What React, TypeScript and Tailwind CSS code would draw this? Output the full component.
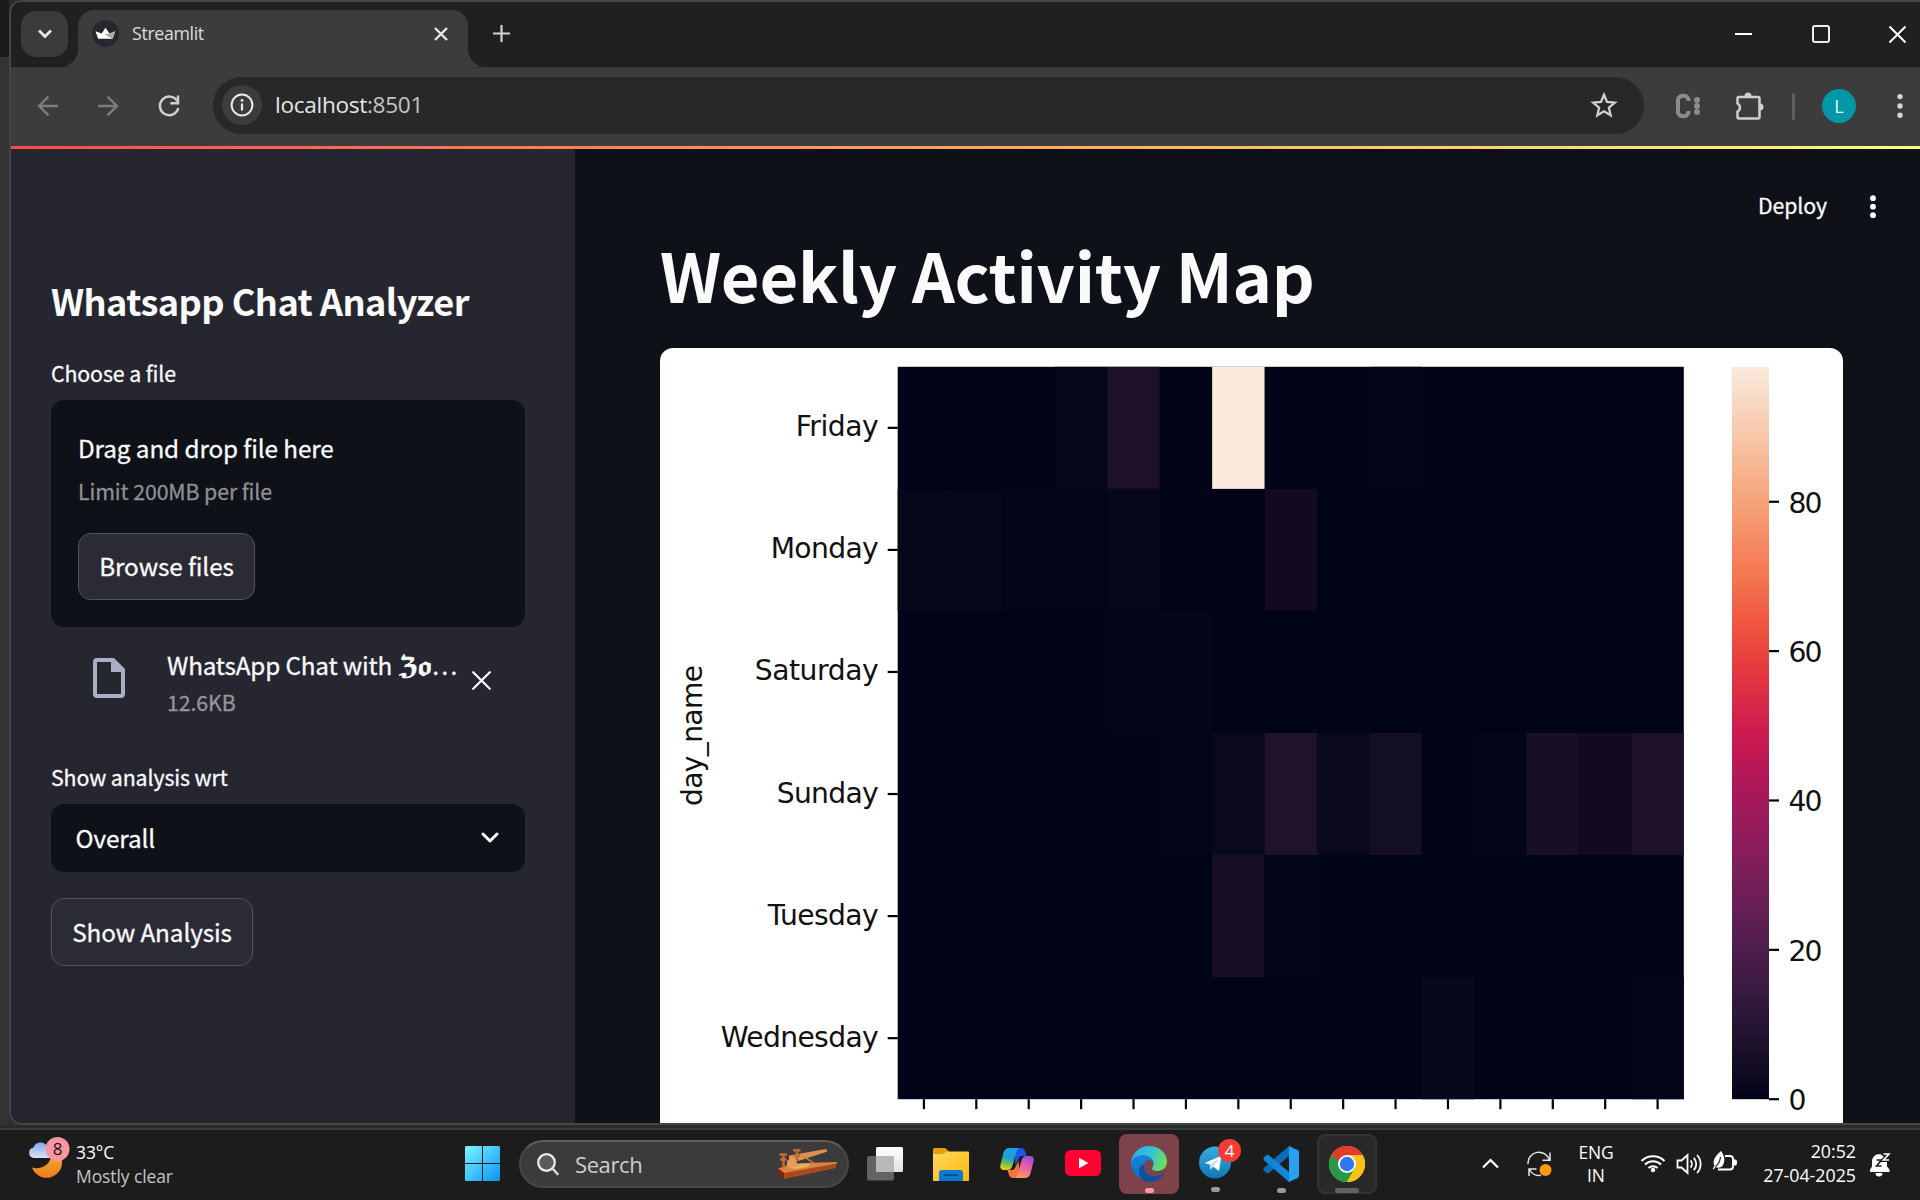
import React from "react";

const UI = "font-['Noto_Sans_CJK_SC','Noto_Sans',sans-serif]";
const SYS = "font-['Open_Sans','Noto_Sans',sans-serif]";

const DAYS = ["Friday", "Monday", "Saturday", "Sunday", "Tuesday", "Wednesday"];
const DAY_WIDTHS = [83, 108, 124, 102, 111, 158];

// [row, column, count]
const CELLS: [number, number, number][] = [
  [0, 3, 2], [0, 4, 7], [0, 6, 98], [0, 9, 1],
  [1, 0, 2], [1, 1, 2], [1, 2, 1], [1, 3, 1], [1, 4, 2], [1, 7, 4],
  [2, 4, 1], [2, 5, 1],
  [3, 5, 1], [3, 6, 3], [3, 7, 8], [3, 8, 3], [3, 9, 5], [3, 11, 1], [3, 12, 6], [3, 13, 4], [3, 14, 7],
  [4, 6, 6], [4, 7, 1],
  [5, 10, 2], [5, 14, 1],
];

const SHADES: Record<number, string> = {
  1: "#030518",
  2: "#06071a",
  3: "#0a081d",
  4: "#110a20",
  5: "#140e22",
  6: "#180f25",
  7: "#1c1128",
  8: "#20122a",
  98: "#faebdc",
};

const ROCKET: [number, string][] = [
  [0, "#faebdd"], [0.07, "#f8d0b5"], [0.143, "#f6b48f"], [0.2, "#f69c73"], [0.286, "#f37651"],
  [0.35, "#ef5640"], [0.4, "#e83f3f"], [0.429, "#e13342"], [0.5, "#cb1b4f"], [0.571, "#ad1759"],
  [0.6, "#a11a5b"], [0.714, "#701f57"], [0.8, "#4c1d4b"], [0.857, "#35193e"], [0.93, "#1c112a"], [1, "#020419"],
];

const PX = 897.7 - 660;
const PY = 366.8 - 348;
const CW = 786.1 / 15;
const RH = 732.4 / 6;

function Heatmap() {
  const bottom = PY + RH * 6;
  return (
    <svg width="1183" height="775" viewBox="0 0 1183 775" className="block" fontFamily="'DejaVu Sans', sans-serif" fontSize="28.2">
      <defs>
        <linearGradient id="rocket" x1="0" y1="0" x2="0" y2="1">
          {ROCKET.map(([o, c]) => <stop key={o} offset={o} stopColor={c} />)}
        </linearGradient>
      </defs>
      <rect x={PX} y={PY} width={CW * 15} height={RH * 6} fill="#010316" />
      {CELLS.map(([r, c, v]) => (
        <rect key={`${r}-${c}`} x={PX + c * CW} y={PY + r * RH} width={CW} height={RH} fill={SHADES[v]} />
      ))}
      {DAYS.map((d, i) => {
        const y = PY + RH * (i + 0.5);
        return (
          <g key={d}>
            <rect x={PX - 10} y={y - 1.1} width="10" height="2.2" fill="#000" />
            <text x={PX - 19} y={y + 8.5} textAnchor="end" textLength={DAY_WIDTHS[i]} fill="#111">{d}</text>
          </g>
        );
      })}
      {Array.from({ length: 15 }, (_, i) => (
        <rect key={i} x={PX + CW * (i + 0.5) - 1.1} y={bottom} width="2.2" height="10" fill="#000" />
      ))}
      <text transform="translate(41.5 387.5) rotate(-90)" textAnchor="middle" textLength="141" fill="#111">day_name</text>
      <rect x="1072" y={PY} width="37" height={RH * 6} fill="url(#rocket)" />
      {[0, 20, 40, 60, 80].map((v) => {
        const y = bottom - v * 7.468;
        return (
          <g key={v}>
            <rect x="1109" y={y - 1.1} width="10" height="2.2" fill="#000" />
            <text x="1128.5" y={y + 11} textLength={v ? 34 : 17} fill="#111">{v}</text>
          </g>
        );
      })}
    </svg>
  );
}

function TabStrip() {
  return (
    <div className="flex h-[65px] items-start bg-[#1f2120] pl-[10px]">
      <div className="mt-[9px] flex h-[46px] w-[47px] items-center justify-center rounded-[15px] bg-[#3b3b3b]">
        <svg width="16" height="12" viewBox="0 0 16 12" fill="none" stroke="#e6e6e6" strokeWidth="2.8"><path d="M2 2.5l6 6 6-6" /></svg>
      </div>
      <div className="relative mt-2 ml-[10px] flex h-[57px] w-[390px] items-start rounded-t-[16px] bg-[#3c3c3c] pl-[14px]">
        <svg className="absolute bottom-0 -left-[18px]" width="18" height="18"><path d="M18 0v18H0A18 18 0 0 0 18 0z" fill="#3c3c3c" /></svg>
        <svg className="absolute bottom-0 -right-[18px]" width="18" height="18"><path d="M0 0v18h18A18 18 0 0 1 0 0z" fill="#3c3c3c" /></svg>
        <svg className="mt-[10px]" width="27" height="27" viewBox="0 0 27 27">
          <circle cx="13.5" cy="13.5" r="13.5" fill="#262730" />
          <path d="M3.5 11.200l6.200 2.300 3.800-5.700 3.900 5.700 6-2.300-2.800 7.600H6.200z" fill="#fff" />
          <path d="M17.400 13.500l6-2.300-2.800 7.600-8-4.200z" fill="#a9a9ad" />
        </svg>
        <span className={`${SYS} mt-[10px] ml-[13px] text-[17.8px] leading-[26px] tracking-[-0.35px] text-[#dedede]`}>Streamlit</span>
        <svg className="absolute top-[17px] left-[356px]" width="14" height="14" viewBox="0 0 14 14" stroke="#e8e8e8" strokeWidth="2.4"><path d="M1 1l12 12M13 1L1 13" /></svg>
      </div>
      <svg className="mt-[23px] ml-[25px]" width="17" height="17" viewBox="0 0 17 17" stroke="#d2d2d2" strokeWidth="2.2"><path d="M8.500 0v17M0 8.500h17" /></svg>
      <div className="mr-[14px] ml-auto flex items-center gap-[59.5px] pt-[23px]">
        <div className="h-[2px] w-[17px] bg-white" />
        <div className="h-[18px] w-[18px] rounded-[3px] border-2 border-[#ececec]" />
        <svg width="17" height="17" viewBox="0 0 17 17" stroke="#fff" strokeWidth="2"><path d="M.5 .5l16 16M16.500 .5l-16 16" /></svg>
      </div>
    </div>
  );
}

function Toolbar() {
  return (
    <div className="flex h-[79px] items-start border-t border-[#343535] bg-[#3c3c3c]">
      <div className="flex h-[76px] w-[202px] items-center pl-[26px]">
        <svg width="22" height="22" viewBox="0 0 22 22" fill="none" stroke="#7d7d7d" strokeWidth="2.3"><path d="M21 11H2.500M11.500 1.600L2 11l9.500 9.400" /></svg>
        <svg className="ml-[38px]" width="22" height="22" viewBox="0 0 22 22" fill="none" stroke="#7d7d7d" strokeWidth="2.3"><path d="M1 11h18.500M10.500 1.600L20 11l-9.500 9.400" /></svg>
        <svg className="ml-[38px]" width="24" height="24" viewBox="0 0 24 24" fill="none" stroke="#cfcfcf" strokeWidth="2.5"><path d="M20.300 7.200A9.300 9.300 0 1 0 21.300 14" /><path d="M21 1.500v7.700h-7.700" /></svg>
      </div>
      <div className="mt-[9px] flex h-[57px] w-[1431px] items-center rounded-full bg-[#282828] pb-px pl-[9px]">
        <div className="flex h-10 w-10 items-center justify-center rounded-full bg-[#3c3c3c]">
          <svg width="24" height="24" viewBox="0 0 24 24"><circle cx="12" cy="12" r="10.400" fill="none" stroke="#ececec" strokeWidth="2" /><path d="M12 10.500v7" stroke="#ececec" strokeWidth="2.200" /><circle cx="12" cy="7.400" r="1.400" fill="#ececec" /></svg>
        </div>
        <span className={`${SYS} ml-[13px] text-[22.6px] leading-[30px] tracking-[-0.3px] text-[#e6e6e6]`}>localhost<span className="text-[#c4c4c4]">:8501</span></span>
        <svg className="mr-[26px] ml-auto" width="28" height="28" viewBox="0 0 28 28" fill="none" stroke="#cfcfcf" strokeWidth="2.300"><path d="M14 3.800l3 7.100 7.800.7-5.900 5.100 1.800 7.600L14 20.300l-6.700 4 1.800-7.600-5.900-5.100 7.800-.7z" /></svg>
      </div>
      <div className="ml-[31px] flex h-[76px] items-center">
        <svg width="26" height="28" viewBox="0 0 26 28"><path d="M13.500 9V7.500A5.500 5.500 0 0 0 3 7.500v13a5.500 5.500 0 0 0 10.500 0V19" fill="none" stroke="#8c8c8c" strokeWidth="4" /><circle cx="22" cy="8" r="3" fill="#8c8c8c" /><circle cx="22" cy="14" r="3" fill="#8c8c8c" /><circle cx="22" cy="20" r="3" fill="#8c8c8c" /></svg>
        <svg className="ml-[34px]" width="30" height="30" viewBox="0 0 30 30"><path d="M4 6h19a1.500 1.500 0 0 1 1.500 1.500V26a1.500 1.500 0 0 1-1.500 1.500H4A1.500 1.500 0 0 1 2.500 26v-5.500a4.500 4.500 0 0 0 0-8V7.500A1.500 1.500 0 0 1 4 6z" fill="none" stroke="#cfcfcf" strokeWidth="2.500" /><path d="M9.500 5a3.500 3.500 0 0 1 7 0zM25 12.500a3.500 3.500 0 0 1 0 7z" fill="#cfcfcf" /></svg>
        <div className="ml-[27px] h-[27px] w-[3px] rounded-full bg-[#5f5f5f]" />
        <div className={`${SYS} ml-[27px] flex h-[34px] w-[34px] items-center justify-center rounded-full bg-[#0097a7] text-[18px] text-[#e4f6f8]`}>L</div>
        <svg className="ml-[40px]" width="8" height="26" viewBox="0 0 8 26" fill="#d5d5d5"><circle cx="4" cy="3.600" r="2.700" /><circle cx="4" cy="13" r="2.700" /><circle cx="4" cy="22.300" r="2.700" /></svg>
      </div>
    </div>
  );
}

function Sidebar() {
  return (
    <aside className={`${UI} h-[974px] w-[564px] shrink-0 bg-[#262630] pt-[129px] pr-[50px] pl-[40px] tracking-[-0.1px] text-[#fafafa] [-webkit-text-stroke:0.3px]`}>
      <h2 className="h-11 text-[36.2px] leading-[44px] font-semibold tracking-[-0.58px] whitespace-nowrap [-webkit-text-stroke:0px]">Whatsapp Chat Analyzer</h2>
      <p className="mt-[37px] h-[28px] text-[21.3px] leading-[28px]">Choose a file</p>
      <div className="mt-[13px] h-[227px] rounded-[13px] bg-[#0e1117] pt-[31px] pl-[27px]">
        <p className="h-[34px] text-[24.3px] leading-[34px]">Drag and drop file here</p>
        <p className="mt-[12px] h-[28px] text-[21.3px] leading-[28px] text-[#8f9093]">Limit 200MB per file</p>
        <button className="mt-[28px] flex h-[67px] w-[177px] items-center justify-center rounded-[13px] border border-[#52535b] bg-[#2b2b36] pb-[2px] text-[24.300px] leading-[34px]">Browse files</button>
      </div>
      <div className="mt-[21px] flex h-[70px] pl-[42px]">
        <svg className="mt-[10px]" width="32" height="40" viewBox="0 0 32 40"><path d="M4 0h17l11 11v25a4 4 0 0 1-4 4H4a4 4 0 0 1-4-4V4a4 4 0 0 1 4-4z M4 4v32h24V14H18V4z" fillRule="evenodd" fill="#a9afc3" /></svg>
        <div className="ml-[42px] w-[296px]">
          <p className="h-[34px] text-[24.300px] leading-[34px] tracking-[-0.18px] whitespace-nowrap">WhatsApp Chat with <span className="font-['DejaVu_Math_TeX_Gyre','DejaVu_Sans',serif] leading-[0] tracking-[-0.8px] [-webkit-text-stroke:0.7px]">𝖅𝖔</span>…</p>
          <p className="mt-[6px] h-[28px] text-[21.300px] leading-[28px] text-[#96969b]">12.6KB</p>
        </div>
        <svg className="mt-[23px] ml-[9px]" width="19" height="19" viewBox="0 0 19 19" fill="none" stroke="#fafafa" strokeWidth="2.200" strokeLinecap="round"><path d="M1.200 1.200l16.600 16.600M17.800 1.200L1.200 17.800" /></svg>
      </div>
      <p className="mt-[45px] h-[28px] text-[21.300px] leading-[28px]">Show analysis wrt</p>
      <div className="mt-[13px] flex h-[68px] items-center justify-between rounded-[13px] bg-[#0e1117] pr-[26px] pb-px pl-[24.5px] text-[24.300px] leading-[34px]">
        Overall
        <svg width="18" height="12" viewBox="0 0 18 12" fill="none" stroke="#fafafa" strokeWidth="3" strokeLinecap="round" strokeLinejoin="round"><path d="M2 2l7 7 7-7" /></svg>
      </div>
      <button className="mt-[26px] flex h-[68px] w-[202px] items-center justify-center rounded-[13px] border border-[#52535b] bg-[#2b2b36] text-[24.300px] leading-[34px]">Show Analysis</button>
    </aside>
  );
}

function Main() {
  return (
    <main className={`${UI} h-[974px] flex-1 overflow-hidden bg-[#0e1117] text-[#fafafa]`}>
      <header className="flex h-[76px] items-end justify-end pr-[43px]">
        <span className="h-[34px] text-[21.300px] leading-[28px] tracking-[-0.1px] [-webkit-text-stroke:0.3px]">Deploy</span>
        <svg className="mb-[6px] ml-[42px]" width="8" height="24" viewBox="0 0 8 24" fill="#fafafa"><circle cx="4" cy="3.200" r="2.900" /><circle cx="4" cy="11.700" r="2.900" /><circle cx="4" cy="20.200" r="2.900" /></svg>
      </header>
      <h1 className="mt-[9px] ml-[85px] h-[80px] text-[66.800px] leading-[80px] font-bold tracking-[-0.25px] whitespace-nowrap">Weekly Activity Map</h1>
      <div className="mt-[34px] ml-[85px] w-[1183px] overflow-hidden rounded-t-[13px] bg-white">
        <Heatmap />
      </div>
    </main>
  );
}

function Weather() {
  return (
    <div className={`${SYS} flex w-[436px] pl-7`}>
      <svg className="mt-[6px]" width="43" height="44" viewBox="0 0 43 44">
        <defs>
          <linearGradient id="moon" x1="0" y1="0" x2="0" y2="1"><stop offset="0" stopColor="#f4b63a" /><stop offset="1" stopColor="#ee7a1b" /></linearGradient>
          <linearGradient id="cloud" x1="0" y1="0" x2="0" y2="1"><stop offset="0" stopColor="#7fa8ea" /><stop offset="1" stopColor="#d9e4f8" /></linearGradient>
        </defs>
        <path d="M28 14a15.500 15.500 0 1 1-24 17.500C13 34 23 29 23.500 18z" fill="url(#moon)" />
        <path d="M6 22a5.300 5.300 0 0 1-.5-10.500 7.500 7.500 0 0 1 13.500-1.500 6 6 0 0 1 3 12z" fill="url(#cloud)" />
        <circle cx="29.500" cy="13" r="12" fill="#fc96a0" />
        <text x="29.500" y="19.300" fontSize="17" textAnchor="middle" fill="#111">8</text>
      </svg>
      <div className="ml-[5px] pt-[10px] text-[17.500px] leading-[24px] tracking-[-0.1px]">
        <p className="text-white">33°C</p>
        <p className="text-[#c4c4c4]">Mostly clear</p>
      </div>
    </div>
  );
}

function TaskIcons() {
  return (
    <>
      <svg className="mt-[16px] ml-[1px] shrink-0" width="35" height="35" viewBox="0 0 35 35">
        <defs><linearGradient id="win" x1="0" y1="0" x2="1" y2="1"><stop offset="0" stopColor="#7cf5ff" /><stop offset="1" stopColor="#0a92f8" /></linearGradient></defs>
        <path d="M1.500 0H17v17H0V1.500A1.500 1.500 0 0 1 1.500 0zM18 0h15.500A1.500 1.500 0 0 1 35 1.500V17H18zM0 18h17v17H1.500A1.500 1.500 0 0 1 0 33.500zM18 18h17v15.500a1.500 1.500 0 0 1-1.500 1.500H18z" fill="url(#win)" />
      </svg>
      <div className="mt-[10px] ml-[19px] flex h-12 w-[330px] shrink-0 items-center rounded-full border-2 border-[#484848] border-t-[#5c5c5c] bg-[#3b3b3b] pl-4">
        <svg width="22" height="23" viewBox="0 0 22 23"><circle cx="9.500" cy="9.500" r="8.300" fill="#5a5a5a" stroke="#f0f0f0" strokeWidth="2.200" /><path d="M15.500 15.500l5 5.500" stroke="#d8d8d8" strokeWidth="2.600" strokeLinecap="round" /></svg>
        <span className={`${SYS} ml-4 text-[22px] leading-[30px] tracking-[-0.4px] text-[#cfcfcf]`}>Search</span>
        <svg className="mr-[9px] ml-auto" width="61" height="32" viewBox="0 0 61 32">
          <path d="M1 22l58-8v6L7 31l-6-6z" fill="#a84a1c" />
          <path d="M1 20.500l14-5 45-1.500v1.500L7 25z" fill="#dd8044" />
          <path d="M1 20.500L7 25v6l-6-5.500z" fill="#7a2415" />
          <path d="M12 20l13-4.500 8 .5-2 3-12 2z" fill="#e2b557" />
          <path d="M12 7.500L49 1l1.500 2.500L23 12.500l-11 1z" fill="#dd8f4f" />
          <path d="M10 19.500V13l4-3h5l1.500 8.500z" fill="#e89a58" />
          <path d="M2.500 6.500h7.500M3 11.500h6.500M6.500 6v14M16 2.200h7.500M16.500 7.500h6.500M20 2v10" stroke="#c26a34" strokeWidth="2.600" />
          <path d="M29 10l9 6" stroke="#d28445" strokeWidth="1.500" />
        </svg>
      </div>
      <svg className="mt-[17px] ml-[18px] shrink-0" width="36" height="34" viewBox="0 0 36 34">
        <defs><linearGradient id="tv" x1="0" y1="0" x2="0" y2="1"><stop offset="0" stopColor="#fff" /><stop offset="1" stopColor="#e2e2e2" /></linearGradient></defs>
        <rect x="0" y="9" width="27" height="24.500" rx="2" fill="#626262" /><rect x="9" y="0" width="27" height="25" rx="1.500" fill="url(#tv)" /><path d="M9 9h18v16H9z" fill="#b9b9b9" />
      </svg>
      <svg className="mt-[18px] ml-[30px] shrink-0" width="36" height="33" viewBox="0 0 36 33">
        <defs><linearGradient id="fold" x1="0" y1="0" x2="1" y2="1"><stop offset="0" stopColor="#ffd95e" /><stop offset="1" stopColor="#fcb80e" /></linearGradient></defs>
        <path d="M1.500 0H12l4 3.500V9H0V1.500A1.500 1.500 0 0 1 1.500 0z" fill="#e2a106" /><path d="M0 6h9l6-2.500h20A1 1 0 0 1 36 4.500v27a1 1 0 0 1-1 1.500H0z" fill="url(#fold)" /><path d="M6 33v-8a3 3 0 0 1 3-3h18a3 3 0 0 1 3 3v8z" fill="#0f78d0" /><path d="M11.500 27.200h13" stroke="#0a4a93" strokeWidth="1.800" strokeLinecap="round" />
      </svg>
      <svg className="mt-[17px] ml-[31px] shrink-0" width="34" height="32" viewBox="0 0 34 32">
        <defs>
          <linearGradient id="cpa" x1=".5" y1="0" x2=".3" y2="1"><stop offset="0" stopColor="#1aa0f0" /><stop offset=".45" stopColor="#1e9fd0" /><stop offset=".75" stopColor="#7cc142" /><stop offset="1" stopColor="#f5d013" /></linearGradient>
          <linearGradient id="cpb" x1=".7" y1="0" x2=".3" y2="1"><stop offset="0" stopColor="#a648e8" /><stop offset=".5" stopColor="#e8639f" /><stop offset="1" stopColor="#ff9d57" /></linearGradient>
          <linearGradient id="cpc" x1="0" y1="0" x2="1" y2="1"><stop offset="0" stopColor="#1a4fd8" /><stop offset="1" stopColor="#1f62ea" /></linearGradient>
        </defs>
        <path d="M14 1h7q3 0 4 3l1.500 5H22q-2.500 0-3.500 3l-3 6z" fill="url(#cpc)" />
        <path d="M20 31h-7q-3 0-4-3l-1.500-5H12q2.500 0 3.500-3l3-6z" fill="#f4743b" />
        <path d="M9 1h11q-2.500 0-3.500 3.500l-4 14Q11.300 23 7.500 23H4Q-.8 23 .5 17.500L3.500 5.500Q5 1 9 1z" fill="url(#cpa)" />
        <path d="M25 31H14q2.500 0 3.500-3.500l4-14Q22.700 9 26.500 9H30q4.800 0 3.500 5.500l-3 12Q29 31 25 31z" fill="url(#cpb)" />
      </svg>
      <svg className="mt-[20px] ml-[31px] shrink-0" width="36" height="26" viewBox="0 0 36 26"><rect width="36" height="26" rx="5.500" fill="#ff0033" /><path d="M14 7.800l9.500 5.200-9.500 5.200z" fill="#fff" /></svg>
      <div className="mt-1 ml-[18px] flex h-[60px] w-[60px] shrink-0 flex-col items-center rounded-[8px] bg-[#7e434a] pt-3">
        <svg width="36" height="36" viewBox="0 0 36 36">
          <defs>
            <linearGradient id="ea" x1="0" y1=".3" x2="1" y2=".6"><stop offset="0" stopColor="#33a9ea" /><stop offset=".5" stopColor="#35c3d4" /><stop offset="1" stopColor="#6be052" /></linearGradient>
            <linearGradient id="eb" x1="0" y1="0" x2="0" y2="1"><stop offset="0" stopColor="#1683d8" /><stop offset="1" stopColor="#0b6fd0" /></linearGradient>
          </defs>
          <path d="M0 18A18 18 0 0 1 18 0c10.500 0 18 7.500 18 15.500 0 6-4.500 9.500-9.500 9.500-3.500 0-5.500-1-5.500-2.500 0-1 1.500-1.500 1.500-5 0-3.500-3.500-8-9.500-8C6 9.500 1 14 0 18z" fill="url(#ea)" />
          <path d="M0 18C.5 13 5 9.300 11 9.300c7 0 11.500 4 11.500 8-1-2-3-3.300-5-3.300-3.500 0-5.500 4-4 9 1.500 5.500 7 9.500 13 9.500A18 18 0 0 1 0 18z" fill="url(#eb)" />
          <path d="M13.200 18C12 24 16 30 23 30c4 0 7-1 9.300-2.800.7-.5 1.300.2 1 .8A18 18 0 0 1 18 36c-6-.5-10-5-10-10.500 0-3.500 2-6.500 5.200-7.500z" fill="#0f4f9e" />
        </svg>
        <div className="mt-[6px] h-[5px] w-[9px] rounded-full bg-[#ff97a2]" />
      </div>
      <div className="relative mt-[16px] ml-5 flex w-[32px] shrink-0 flex-col items-center">
        <svg width="32" height="33" viewBox="0 0 32 33"><defs><linearGradient id="tg" x1="0" y1="0" x2="0" y2="1"><stop offset="0" stopColor="#37aee2" /><stop offset="1" stopColor="#1077b5" /></linearGradient></defs><circle cx="16" cy="16.500" r="16" fill="url(#tg)" /><path d="M5.500 17l17-7.300L20 25l-6-4.500-2.500 3-.7-5z" fill="#fff" /><path d="M11 18.500l9-6-6 8-2.500 3z" fill="#c3dcef" /></svg>
        <div className={`${SYS} absolute -top-[7px] left-[19px] flex h-[23px] w-[23px] items-center justify-center rounded-full bg-[#f33b36] text-[17px] text-white`}>4</div>
        <div className="mt-[8px] h-[5px] w-[9px] rounded-full bg-[#9a9a9a]" />
      </div>
      <div className="mt-4 ml-8 flex w-9 shrink-0 flex-col items-center">
        <svg width="36" height="36" viewBox="0 0 36 36"><path d="M26 0v10L5.500 27.200 4 27.500.6 24.500v-2.300z" fill="#0b6db8" /><path d="M26 36V26L5.500 9 4 8.700.6 11.700V14z" fill="#0f86d6" /><path d="M26 0l8.500 4A2.500 2.500 0 0 1 36 6.200v23.600a2.500 2.500 0 0 1-1.500 2.200L26 36z" fill="#27a0f0" /></svg>
        <div className="mt-[6px] h-[5px] w-[9px] rounded-full bg-[#9a9a9a]" />
      </div>
      <div className="mt-1 ml-[18px] flex h-[60px] w-[60px] shrink-0 flex-col items-center rounded-[8px] border-2 border-[#333] bg-[#292929] pt-[10px]">
        <svg className="shrink-0" width="36" height="36" viewBox="0 0 36 36"><circle cx="18" cy="18" r="18" fill="#fbc116" /><path d="M18 18L2.400 9A18 18 0 0 0 18 36l8-14z" fill="#279847" /><path d="M18 9h15.600A18 18 0 0 0 2.400 9l7.800 13.500L18 18z" fill="#e33b2e" /><path d="M2.400 9l7.800 13.500L18 18 10 13z" fill="#279847" /><path d="M2.400 9A18 18 0 0 1 33.600 9H18a9 9 0 0 0-8.500 6z" fill="#e33b2e" /><path d="M33.600 9A18 18 0 0 1 18 36l7.800-13.500A9 9 0 0 0 18 9z" fill="#fbc116" /><circle cx="18" cy="18" r="9" fill="#fff" /><circle cx="18" cy="18" r="7.200" fill="#2f77ee" /></svg>
        <div className="mt-[6px] h-[5px] w-6 shrink-0 rounded-full bg-[#616161]" />
      </div>
    </>
  );
}

function Tray() {
  return (
    <div className={`${SYS} ml-auto flex items-start text-[17.400px] leading-[23px] text-white`}>
      <svg className="mt-[28px]" width="17" height="11" viewBox="0 0 17 11" fill="none" stroke="#fff" strokeWidth="2.200"><path d="M1 9.500l7.500-7.500 7.500 7.500" /></svg>
      <svg className="mt-[21px] ml-[28px]" width="25" height="26" viewBox="0 0 25 26" fill="none" stroke="#e6e6e6" strokeWidth="1.500"><path d="M1 13A11 11 0 0 1 22.500 9M23 1.500v7.700h-7.500M2 25v-7h7.500M2.500 18.500A11 11 0 0 0 14 24.300" /><circle cx="18.500" cy="19" r="6" fill="#ff9a0a" stroke="none" /></svg>
      <div className="mt-[11px] ml-[25px] w-[38px] text-center tracking-[-0.1px]"><p>ENG</p><p>IN</p></div>
      <svg className="mt-[23px] ml-[25px]" width="26" height="20" viewBox="0 0 26 20" fill="none" stroke="#fff" strokeWidth="2"><path d="M1.500 8a16.300 16.300 0 0 1 23 0M5 11.500a11.300 11.300 0 0 1 16 0M8.500 15a6.400 6.400 0 0 1 9 0" /><circle cx="13" cy="17" r="2.200" fill="#fff" stroke="none" /></svg>
      <svg className="mt-[23px] ml-[10px]" width="26" height="22" viewBox="0 0 26 22" fill="none" stroke="#fff" strokeWidth="1.800"><path d="M1.500 7.500h4l6-5.500v18l-6-5.500h-4zM14.500 7.500a5 5 0 0 1 0 7M17.700 4.800a8.800 8.800 0 0 1 0 12.400M21 2a13 13 0 0 1 0 18" /></svg>
      <svg className="mt-[20px] ml-[10px]" width="26" height="23" viewBox="0 0 26 23" fill="none" stroke="#fff" strokeWidth="1.900"><path d="M13 6h5a3 3 0 0 1 3 3v7.500a3 3 0 0 1-3 3H6" /><path d="M22 9.500h1.500q1.500 0 1.500 3t-1.500 3H22z" fill="#fff" stroke="none" /><path d="M9 1c3 4 5 9 1.500 15-2 2-5 2-7 1l-2 2.500-.8-1L2.500 16C0 11 3 6 9 1z" fill="#fff" stroke="none" /><path d="M3.500 16.500C7 14 8 11 8.500 7" stroke="#1c1c1c" strokeWidth="1.200" /></svg>
      <div className="mt-[9px] ml-[20px] w-[98px] text-right text-[17.800px] leading-[24px] whitespace-nowrap [direction:ltr]"><p>20:52</p><p className="-ml-1">27-04-2025</p></div>
      <svg className="mt-[22px] mr-[29px] ml-[13px]" width="22" height="25" viewBox="0 0 22 25"><path d="M1 17.500l2-3V9.500a7 7 0 0 1 9-7l6 5v7l2.500 3V20H1z" fill="#fff" /><path d="M6.500 21h7a3.500 3.500 0 0 1-7 0z" fill="#fff" /><path d="M7.500 8h5l-5 6h5" fill="none" stroke="#1c1c1c" strokeWidth="1.600" /><path d="M14.500 2H20l-5.500 6H20" fill="none" stroke="#1c1c1c" strokeWidth="4" /><path d="M14.500 2H20l-5.500 6H20" fill="none" stroke="#fff" strokeWidth="1.600" /></svg>
    </div>
  );
}

export default function App() {
  return (
    <div className="h-[1200px] w-[1920px] overflow-hidden bg-[#1c1c1c]">
      <div className="flex h-[1128px] bg-[#2b2b2b]">
        <div className="w-[9px] shrink-0">
          <div className="h-[57px] bg-[#1b1b1b]" />
          <div className="h-[1068px] bg-[#333332]" />
        </div>
        <div className="h-[1125px] w-[1911px] shrink-0 overflow-hidden rounded-l-[13px] border-y-2 border-l-2 border-[#434746]">
          <TabStrip />
          <Toolbar />
          <div className="h-[3px] bg-[linear-gradient(90deg,#ff4b4b,#ffd068_75%,#fffd80)]" />
          <div className="flex">
            <Sidebar />
            <Main />
          </div>
        </div>
      </div>
      <div className="flex h-[72px] border-t-2 border-[#3b3b3b] bg-[#1c1c1c]">
        <Weather />
        <div className="flex w-[950px] shrink-0 pl-[28px]"><TaskIcons /></div>
        <Tray />
      </div>
    </div>
  );
}
